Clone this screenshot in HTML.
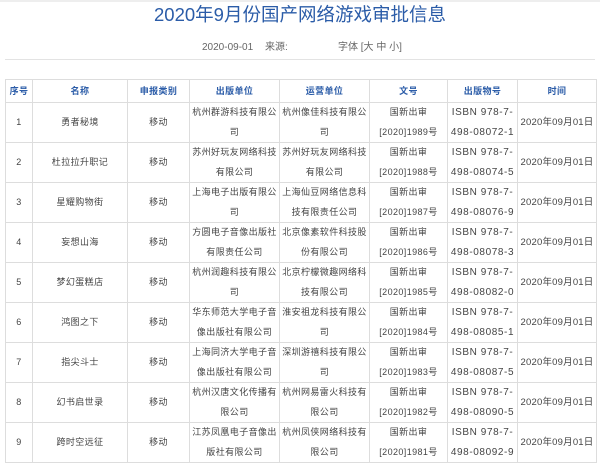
<!DOCTYPE html>
<html><head><meta charset="utf-8"><style>
body{margin:0;background:#fff;font-family:"Liberation Sans","Noto Sans CJK SC",sans-serif;width:600px;height:463px;overflow:hidden;position:relative;}
.top{height:2px;background:#eee;}
h1{margin:0;position:absolute;top:2px;left:0;width:600px;text-align:center;font-weight:normal;font-size:18.5px;color:#2b5ca8;line-height:26px;}
.meta{position:absolute;top:40px;left:0;width:600px;font-size:10px;color:#666;line-height:16px;}
.meta span{position:absolute;}
.hr{position:absolute;top:59px;left:5px;width:590px;height:1px;background:#e3e3e3;}
table{position:absolute;top:79px;left:5px;border-collapse:collapse;table-layout:fixed;width:591px;font-size:9px;letter-spacing:0.4px;color:#444;}
td,th{border:1px solid #ddd;text-align:center;padding:0;line-height:19.5px;overflow:hidden;white-space:normal;}
th{height:22px;line-height:22px;color:#2b5ca8;font-weight:bold;background:#fff;}
td{height:39px;}
td.n{font-family:"Liberation Sans",sans-serif;font-size:10px;letter-spacing:0.6px;}
td.d{font-size:9.5px;letter-spacing:0.2px;}
</style></head><body>
<div class="top"></div>
<h1>2020年9月份国产网络游戏审批信息</h1>
<div class="meta"><span style="left:202px">2020-09-01</span><span style="left:265px">来源:</span><span style="left:338px">字体 [大 中 小]</span></div>
<div class="hr"></div>
<table>
<colgroup><col style="width:27px"><col style="width:95px"><col style="width:62px"><col style="width:90px"><col style="width:90px"><col style="width:78px"><col style="width:70px"><col style="width:79px"></colgroup>
<tr><th>序号</th><th>名称</th><th>申报类别</th><th>出版单位</th><th>运营单位</th><th>文号</th><th>出版物号</th><th>时间</th></tr>
<tr><td>1</td><td>勇者秘境</td><td>移动</td><td>杭州群游科技有限公司</td><td>杭州像佳科技有限公司</td><td>国新出审<br>[2020]1989号</td><td class="n">ISBN 978-7-<br>498-08072-1</td><td class="d">2020年09月01日</td></tr>
<tr><td>2</td><td>杜拉拉升职记</td><td>移动</td><td>苏州好玩友网络科技有限公司</td><td>苏州好玩友网络科技有限公司</td><td>国新出审<br>[2020]1988号</td><td class="n">ISBN 978-7-<br>498-08074-5</td><td class="d">2020年09月01日</td></tr>
<tr><td>3</td><td>星耀购物街</td><td>移动</td><td>上海电子出版有限公司</td><td>上海仙豆网络信息科技有限责任公司</td><td>国新出审<br>[2020]1987号</td><td class="n">ISBN 978-7-<br>498-08076-9</td><td class="d">2020年09月01日</td></tr>
<tr><td>4</td><td>妄想山海</td><td>移动</td><td>方圆电子音像出版社有限责任公司</td><td>北京像素软件科技股份有限公司</td><td>国新出审<br>[2020]1986号</td><td class="n">ISBN 978-7-<br>498-08078-3</td><td class="d">2020年09月01日</td></tr>
<tr><td>5</td><td>梦幻蛋糕店</td><td>移动</td><td>杭州润趣科技有限公司</td><td>北京柠檬微趣网络科技有限公司</td><td>国新出审<br>[2020]1985号</td><td class="n">ISBN 978-7-<br>498-08082-0</td><td class="d">2020年09月01日</td></tr>
<tr><td>6</td><td>鸿图之下</td><td>移动</td><td>华东师范大学电子音像出版社有限公司</td><td>淮安祖龙科技有限公司</td><td>国新出审<br>[2020]1984号</td><td class="n">ISBN 978-7-<br>498-08085-1</td><td class="d">2020年09月01日</td></tr>
<tr><td>7</td><td>指尖斗士</td><td>移动</td><td>上海同济大学电子音像出版社有限公司</td><td>深圳游禧科技有限公司</td><td>国新出审<br>[2020]1983号</td><td class="n">ISBN 978-7-<br>498-08087-5</td><td class="d">2020年09月01日</td></tr>
<tr><td>8</td><td>幻书启世录</td><td>移动</td><td>杭州汉唐文化传播有限公司</td><td>杭州网易雷火科技有限公司</td><td>国新出审<br>[2020]1982号</td><td class="n">ISBN 978-7-<br>498-08090-5</td><td class="d">2020年09月01日</td></tr>
<tr><td>9</td><td>跨时空远征</td><td>移动</td><td>江苏凤凰电子音像出版社有限公司</td><td>杭州凤侠网络科技有限公司</td><td>国新出审<br>[2020]1981号</td><td class="n">ISBN 978-7-<br>498-08092-9</td><td class="d">2020年09月01日</td></tr>
</table>
</body></html>
